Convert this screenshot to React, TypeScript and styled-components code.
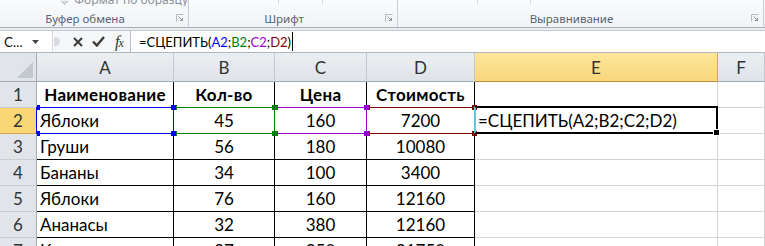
import React from 'react'
import styled, { createGlobalStyle } from 'styled-components'

const GlobalStyle = createGlobalStyle`
  html, body {
    margin: 0;
    padding: 0;
    background: #ffffff;
    overflow: hidden;
  }
  body {
    font-family: 'Lato', 'Open Sans', sans-serif;
  }
`

const Window = styled.div`
  width: 765px;
  height: 246px;
  overflow: hidden;
  display: flex;
  flex-direction: column;
  background: #fff;
`

/* ---------- ribbon ---------- */

const Ribbon = styled.div`
  height: 27px;
  flex: none;
  display: flex;
  background: linear-gradient(#fafbfc, #f1f3f5);
  border-bottom: 1px solid #a9b0b9;
`

const Group = styled.div<{ $w: number }>`
  width: ${(p) => p.$w}px;
  flex: none;
  box-sizing: border-box;
  border-right: 1px solid #c9ced5;
  display: flex;
  flex-direction: column;
  justify-content: space-between;
  overflow: hidden;
`

const GroupTop = styled.div`
  height: 6px;
  display: flex;
  align-items: flex-end;
  overflow: hidden;
`

const CutLabel = styled.span`
  font-family: 'Noto Sans', sans-serif;
  font-size: 12px;
  line-height: 12px;
  color: #8c9299;
  margin-top: -6px;
  margin-left: 5px;
  white-space: nowrap;
`

const Tick = styled.div<{ $at: number }>`
  width: 1px;
  height: 4px;
  margin-left: ${(p) => p.$at}px;
  align-self: flex-start;
  background: #d3d7dc;
`

const GroupFoot = styled.div`
  height: 16px;
  display: flex;
  align-items: center;
  padding-bottom: 1px;
`

const GroupLabel = styled.span`
  flex: 1;
  text-align: center;
  font-family: 'Noto Sans', sans-serif;
  font-size: 11.5px;
  color: #5a6474;
  white-space: nowrap;
`

const Launcher = styled.span`
  width: 18px;
  display: flex;
  justify-content: flex-end;
  padding-right: 4px;
  box-sizing: border-box;
`

const LauncherIcon = () => (
  <svg width="8" height="8" viewBox="0 0 8 8">
    <path d="M0.5 7.5V0.5H7.5" fill="none" stroke="#b4bac2" />
    <path d="M2.5 2.5L6.5 6.5M3.8 6.5H6.5V3.8" fill="none" stroke="#8d959f" />
  </svg>
)

const Strip = styled.div`
  height: 2px;
  flex: none;
  background: #e9ecf0;
`

/* ---------- formula bar ---------- */

const FormulaBar = styled.div`
  height: 23px;
  flex: none;
  box-sizing: border-box;
  display: flex;
  border-top: 1px solid #c3c9d0;
  border-bottom: 1px solid #b0b7c0;
  background: #f6f7f9;
`

const NameBox = styled.div`
  width: 53px;
  flex: none;
  box-sizing: border-box;
  display: flex;
  align-items: center;
  background: #fff;
  border-right: 1px solid #d6dae0;
  padding-left: 4px;
  font-family: 'Lato', 'Open Sans', sans-serif;
  font-size: 13.5px;
  color: #111;
`

const NameText = styled.span`
  flex: 1;
`

const Controls = styled.div`
  width: 77px;
  flex: none;
  display: flex;
  align-items: center;
`

const Splitter = styled.span`
  width: 6px;
  height: 9px;
  margin-left: 1px;
  border-radius: 0 5px 5px 0;
  background: #d9dde2;
`

const IconSlot = styled.span<{ $ml: number }>`
  display: flex;
  align-items: center;
  margin-left: ${(p) => p.$ml}px;
`

const Fx = styled.span`
  margin-left: 10px;
  font-family: 'Liberation Serif', serif;
  font-style: italic;
  font-size: 16px;
  color: #333;
  letter-spacing: -1px;
  & small {
    font-size: 12px;
  }
`

const FormulaInput = styled.div`
  flex: 1;
  display: flex;
  align-items: center;
  background: #fff;
  border-left: 1px solid #b8bec6;
  padding-left: 8px;
  font-family: 'Lato', 'Open Sans', sans-serif;
  font-size: 13px;
  color: #000;
  white-space: pre;
`

const Ref = styled.span<{ $c: string }>`
  color: ${(p) => p.$c};
`

const Caret = styled.span`
  width: 1px;
  height: 19px;
  margin-left: 1px;
  background: #000;
`

/* ---------- sheet ---------- */

const Sheet = styled.div`
  display: grid;
  grid-template-columns: 37px 137px 101px 92px 108px 243px 1fr;
  grid-template-rows: 29px repeat(7, 26px);
  font-family: 'Lato', 'Open Sans', sans-serif;
  font-size: 17px;
`

const Corner = styled.div`
  box-sizing: border-box;
  background: #e1e4e8;
  border-right: 1px solid #a4acb6;
  border-bottom: 1px solid #a4acb6;
  display: flex;
  align-items: flex-end;
  justify-content: flex-end;
  padding: 0 3px 3px 0;
`

const ColHeader = styled.div<{ $active?: boolean }>`
  box-sizing: border-box;
  display: flex;
  align-items: center;
  justify-content: center;
  padding-top: 1px;
  color: #333;
  background: ${(p) =>
    p.$active ? 'linear-gradient(#fde59a, #f9d77c)' : 'linear-gradient(#eceff2, #dfe3e8)'};
  border-right: 1px solid ${(p) => (p.$active ? '#d9a84e' : '#c3c9d1')};
  border-bottom: 1px solid ${(p) => (p.$active ? '#c28e3a' : '#a4acb6')};
`

const RowHeader = styled.div<{ $active?: boolean }>`
  box-sizing: border-box;
  display: flex;
  align-items: center;
  justify-content: center;
  color: #333;
  background: ${(p) => (p.$active ? '#f9d774' : '#e1e4e8')};
  border-right: 1px solid ${(p) => (p.$active ? '#c28e3a' : '#a4acb6')};
  border-bottom: 1px solid ${(p) => (p.$active ? '#d9a84e' : '#c9ced5')};
`

const Cell = styled.div<{ $grid?: boolean; $bold?: boolean; $left?: boolean }>`
  position: relative;
  box-sizing: border-box;
  display: flex;
  align-items: center;
  justify-content: ${(p) => (p.$left ? 'flex-start' : 'center')};
  padding-left: ${(p) => (p.$left ? '3px' : '0')};
  font-weight: ${(p) => (p.$bold ? 700 : 400)};
  letter-spacing: ${(p) => (p.$bold ? '0.3px' : 'normal')};
  color: #000;
  white-space: nowrap;
  border-right: 1px solid ${(p) => (p.$grid ? '#d4d4d4' : '#000')};
  border-bottom: 1px solid ${(p) => (p.$grid ? '#d4d4d4' : '#000')};
`

const RangeBox = styled.span<{ $c: string; $z: number }>`
  position: absolute;
  top: -1px;
  left: -1px;
  right: -1px;
  bottom: -1px;
  border: 1px solid ${(p) => p.$c};
  z-index: ${(p) => p.$z};
  pointer-events: none;
`

const Handle = styled.span<{ $c: string; $corner: 'tl' | 'tr' | 'bl' | 'br' }>`
  position: absolute;
  background: ${(p) => p.$c};
  width: ${(p) => (p.$corner[1] === 'l' ? 3 : 5)}px;
  height: 5px;
  ${(p) => (p.$corner[0] === 't' ? 'top: -3px;' : 'bottom: -3px;')}
  ${(p) => (p.$corner[1] === 'l' ? 'left: 0;' : 'right: -3px;')}
`

const ActiveBox = styled.span`
  position: absolute;
  top: -2px;
  left: -1px;
  right: -1px;
  bottom: -1px;
  border: 2px solid #000;
  border-left-color: #5cc6da;
  z-index: 5;
`

const FillHandle = styled.span`
  position: absolute;
  right: -4px;
  bottom: -4px;
  width: 5px;
  height: 5px;
  background: #000;
  border: 1px solid #fff;
`

const CellText = styled.span`
  position: relative;
  z-index: 6;
`

const columns = ['A', 'B', 'C', 'D', 'E', 'F']

const rows: string[][] = [
  ['Наименование', 'Кол-во', 'Цена', 'Стоимость'],
  ['Яблоки', '45', '160', '7200'],
  ['Груши', '56', '180', '10080'],
  ['Бананы', '34', '100', '3400'],
  ['Яблоки', '76', '160', '12160'],
  ['Ананасы', '32', '380', '12160'],
  ['Киви', '87', '250', '21750'],
]

const refColors = ['#0000ff', '#008000', '#9900cc', '#800000']

const Range = ({ color, z }: { color: string; z: number }) => (
  <RangeBox $c={color} $z={z}>
    <Handle $c={color} $corner="tl" />
    <Handle $c={color} $corner="bl" />
    <Handle $c={color} $corner="tr" />
    <Handle $c={color} $corner="br" />
  </RangeBox>
)

const App: React.FC = () => {
  return (
    <Window>
      <GlobalStyle />
      <Ribbon>
        <Group $w={189}>
          <GroupTop>
            <svg width="12" height="6" viewBox="0 0 12 6" style={{ marginLeft: 60 }}>
              <path d="M1 0L6 5L11 0" fill="#d4d7db" stroke="#a9aeb5" />
            </svg>
            <CutLabel>Формат по образцу</CutLabel>
          </GroupTop>
          <GroupFoot>
            <GroupLabel>Буфер обмена</GroupLabel>
            <Launcher>
              <LauncherIcon />
            </Launcher>
          </GroupFoot>
        </Group>
        <Group $w={209}>
          <GroupTop>
            <Tick $at={89} />
            <Tick $at={43} />
          </GroupTop>
          <GroupFoot>
            <GroupLabel>Шрифт</GroupLabel>
            <Launcher>
              <LauncherIcon />
            </Launcher>
          </GroupFoot>
        </Group>
        <Group $w={366}>
          <GroupTop>
            <Tick $at={79} />
            <Tick $at={52} />
          </GroupTop>
          <GroupFoot>
            <GroupLabel>Выравнивание</GroupLabel>
            <Launcher>
              <LauncherIcon />
            </Launcher>
          </GroupFoot>
        </Group>
      </Ribbon>
      <Strip />
      <FormulaBar>
        <NameBox>
          <NameText>С...</NameText>
          <svg width="20" height="6" viewBox="0 0 20 6">
            <path d="M0 1H7L3.5 5Z" fill="#444" />
          </svg>
        </NameBox>
        <Controls>
          <Splitter />
          <IconSlot $ml={13}>
            <svg width="10" height="10" viewBox="0 0 10 10">
              <path d="M1 1L9 9M9 1L1 9" stroke="#3c3c3c" strokeWidth="2" />
            </svg>
          </IconSlot>
          <IconSlot $ml={9}>
            <svg width="13" height="11" viewBox="0 0 13 11">
              <path d="M1 5.5L4.8 9.5L12 1" fill="none" stroke="#3c3c3c" strokeWidth="2.4" />
            </svg>
          </IconSlot>
          <Fx>
            f<small>x</small>
          </Fx>
        </Controls>
        <FormulaInput>
          =СЦЕПИТЬ(<Ref $c={refColors[0]}>A2</Ref>;<Ref $c={refColors[1]}>B2</Ref>;
          <Ref $c={refColors[2]}>C2</Ref>;<Ref $c={refColors[3]}>D2</Ref>)
          <Caret />
        </FormulaInput>
      </FormulaBar>
      <Sheet>
        <Corner>
          <svg width="16" height="16" viewBox="0 0 16 16">
            <path d="M16 0V16H0Z" fill="#c3c8ce" />
          </svg>
        </Corner>
        {columns.map((c) => (
          <ColHeader key={c} $active={c === 'E'}>
            {c}
          </ColHeader>
        ))}
        {rows.map((row, r) => (
          <React.Fragment key={r}>
            <RowHeader $active={r === 1}>{r + 1}</RowHeader>
            {row.map((v, c) => (
              <Cell key={c} $bold={r === 0} $left={r > 0 && c === 0}>
                {r === 1 && <Range color={refColors[c]} z={4 - c} />}
                {v}
              </Cell>
            ))}
            <Cell $grid $left>
              {r === 1 && (
                <>
                  <ActiveBox>
                    <FillHandle />
                  </ActiveBox>
                  <CellText>=СЦЕПИТЬ(A2;B2;C2;D2)</CellText>
                </>
              )}
            </Cell>
            <Cell $grid />
          </React.Fragment>
        ))}
      </Sheet>
    </Window>
  )
}

export default App
